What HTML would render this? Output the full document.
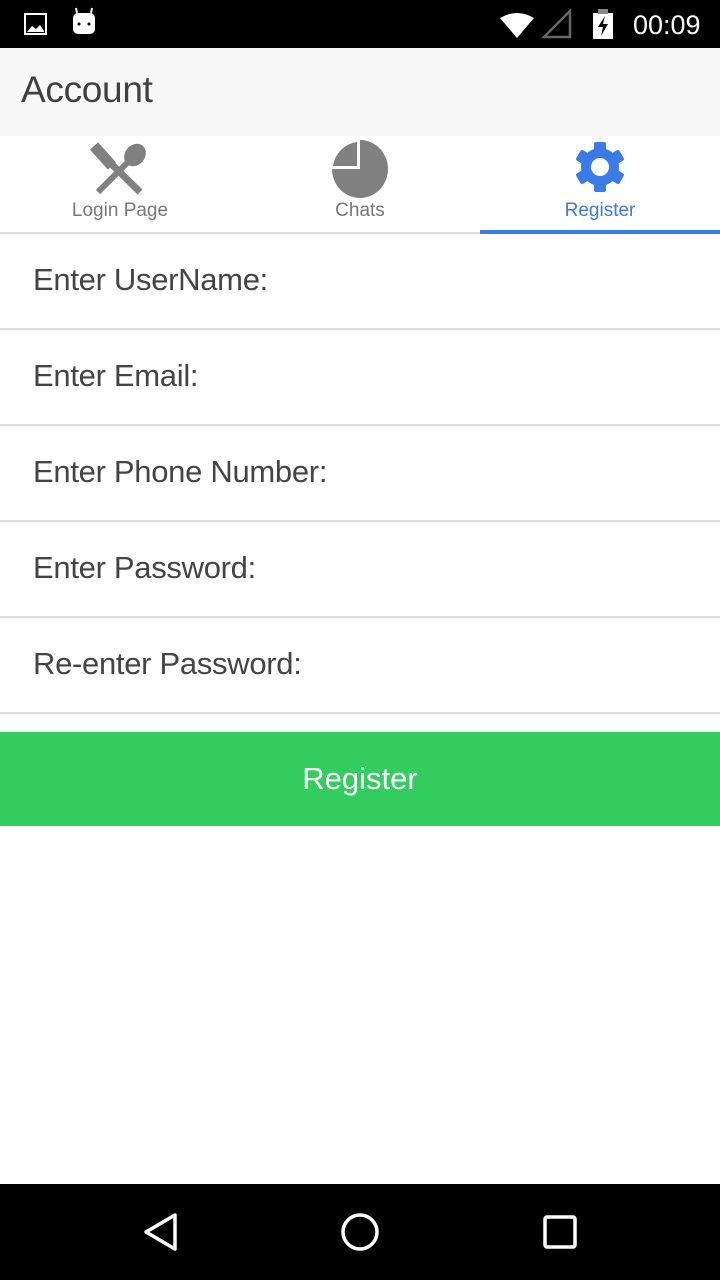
<!DOCTYPE html>
<html><head><style>
body{margin:0;width:720px;height:1280px;position:relative;background:#fff;font-family:"Liberation Sans",sans-serif;overflow:hidden}
.abs{position:absolute}
.row{position:absolute;left:0;width:720px;height:94px;border-bottom:2px solid #dcdcdc;box-sizing:content-box}
.row span{position:absolute;left:33px;top:28px;font-size:31px;color:#444;letter-spacing:-0.3px}
.tab{position:absolute;top:200px;font-size:19px;color:#777;width:240px;text-align:center}
</style></head><body>
<div class="abs" style="top:0;left:0;width:720px;height:48px;background:#000"></div>
<svg class="abs" style="left:0;top:0" width="720" height="48">
<rect x="25" y="14" width="21" height="20" fill="none" stroke="#fff" stroke-width="2"/>
<path d="M27 32 L32 26 L36 29 L40 25 L44 31 L44 32 Z" fill="#fff"/>
<rect x="73" y="13" width="22" height="21" rx="5" fill="#fff"/>
<line x1="77" y1="13" x2="76" y2="8" stroke="#fff" stroke-width="2"/><line x1="91" y1="13" x2="92" y2="8" stroke="#fff" stroke-width="2"/>
<circle cx="79" cy="24" r="1.5" fill="#000"/><circle cx="89" cy="24" r="1.5" fill="#000"/>
<path d="M500 18 Q517 8 534 18 L517 38 Z" fill="#fff"/>
<path d="M544 37 L570 37 L570 11 Z" fill="none" stroke="#666" stroke-width="2.5"/>
<rect x="593" y="13" width="20" height="26" fill="#fff"/><rect x="598" y="9" width="10" height="5" fill="#888"/>
<path d="M605 16 L598 27 L603 27 L601 36 L608 24 L603 24 Z" fill="#000"/>
<text x="633" y="34" font-size="27" fill="#fff" font-family="Liberation Sans">00:09</text>
</svg>
<div class="abs" style="top:48px;left:0;width:720px;height:88px;background:#f7f7f7"></div>
<div class="abs" style="top:69px;left:21px;font-size:37px;color:#404040;letter-spacing:-0.3px">Account</div>
<svg class="abs" style="left:0;top:136px" width="720" height="62">
<path d="M97 14 L140 56" stroke="#808080" stroke-width="7"/>
<path d="M94 10 L112 30" stroke="#808080" stroke-width="11"/>
<path d="M98 56 L128 26" stroke="#808080" stroke-width="6"/>
<ellipse cx="135" cy="19" rx="10" ry="12" transform="rotate(40 135 19)" fill="#808080"/>
<path d="M360 4 A28 29 0 1 1 332 33 L360 33 Z" fill="#808080"/>
<path d="M357 6 L357 30 L333 30 A28 28 0 0 1 357 6 Z" fill="#808080"/>
<g transform="translate(600 31)" fill="#3a7be6">
<circle r="19"/>
<g id="t"><rect x="-6" y="-25" width="12" height="10" rx="2"/></g>
<use href="#t" transform="rotate(60)"/><use href="#t" transform="rotate(120)"/><use href="#t" transform="rotate(180)"/><use href="#t" transform="rotate(240)"/><use href="#t" transform="rotate(300)"/>
<circle r="9" fill="#fff"/>
</g>
</svg>
<div class="tab" style="left:0">Login Page</div>
<div class="tab" style="left:240px">Chats</div>
<div class="tab" style="left:480px;color:#3a7be6">Register</div>
<div class="abs" style="top:232px;left:0;width:720px;height:2px;background:#dcdcdc"></div>
<div class="abs" style="top:230px;left:480px;width:240px;height:4px;background:#3a7be6"></div>
<div class="row" style="top:234px"><span>Enter UserName:</span></div>
<div class="row" style="top:330px"><span>Enter Email:</span></div>
<div class="row" style="top:426px"><span>Enter Phone Number:</span></div>
<div class="row" style="top:522px"><span>Enter Password:</span></div>
<div class="row" style="top:618px"><span>Re-enter Password:</span></div>
<div class="abs" style="top:732px;left:0;width:720px;height:94px;background:#33cd5f;color:#fff;font-size:31px;text-align:center;line-height:94px">Register</div>
<div class="abs" style="top:1184px;left:0;width:720px;height:96px;background:#000"></div>
<svg class="abs" style="left:0;top:1184px" width="720" height="96">
<path d="M175 31 L146 48 L175 65 Z" fill="none" stroke="#fff" stroke-width="3.5" stroke-linejoin="round"/>
<circle cx="360" cy="48" r="17" fill="none" stroke="#fff" stroke-width="3.5"/>
<rect x="545" y="33" width="30" height="30" rx="2" fill="none" stroke="#fff" stroke-width="3.5"/>
</svg>
</body></html>
